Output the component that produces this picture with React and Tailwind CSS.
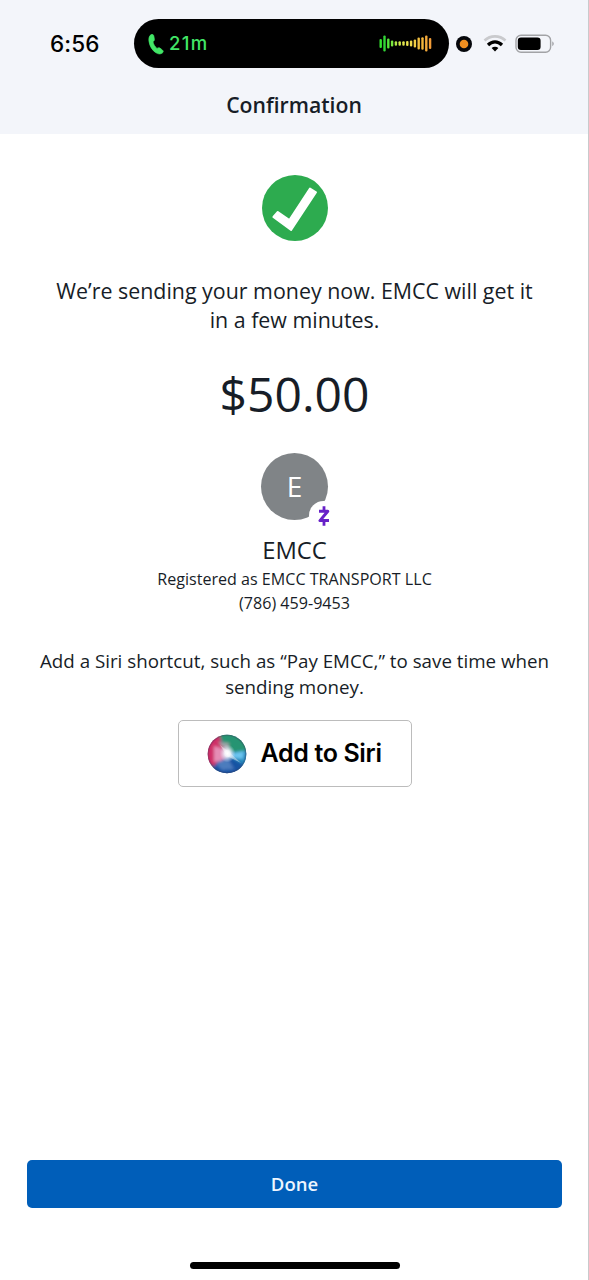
const BARS = [
  [0, 9, '#35e22f'], [3.8, 16, '#32d636'], [7.6, 10, '#55e63a'], [11.4, 6, '#7ae83f'],
  [15.2, 4.5, '#b0ea45'], [19, 4.5, '#d0ea4c'], [22.8, 4.5, '#e2e64e'], [26.6, 5, '#eae14c'],
  [30.4, 6, '#f0d94a'], [34.2, 8, '#f2ce45'], [38, 12, '#f2c040'], [41.8, 12.5, '#f4b63c'],
  [45.6, 16, '#f4aa3b'], [49.4, 11, '#f29c38'],
];

function StatusBar() {
  return (
    <div className="flex h-[87px] items-center font-['Inter','Liberation_Sans',sans-serif]">
      <span className="ml-[50px] mt-px w-[84px] whitespace-nowrap text-[22.5px] font-medium tracking-[0.1px] text-black">6:56</span>
      <div className="flex h-[49px] w-[315px] shrink-0 items-center rounded-full bg-black pl-[14px] pr-[16px]">
        <svg className="mt-px h-[21px] w-[16px]" viewBox="0 0 16 21" fill="#42e667" stroke="#42e667" strokeWidth="0.6">
          <path d="M3.2.6C4.6-.1 5.5.6 5.9 2.2L6.4 5.200C6.600 6.400 5.900 7 5 7.800C5.500 10.400 7 12.700 9 14.400C10 13.700 11 13.400 12 14.100L14.400 16C15.600 17 15.500 18.200 14.300 19C12.600 20.300 10.200 20.300 8 18.800C4.300 16.400 1.500 12.200.900 6.900C.600 4.100 1.200 1.600 3.200.600Z" />
        </svg>
        <span className="ml-[5px] text-[18.5px] font-medium tracking-[1.3px] text-[#42e667]">21m</span>
        <svg className="ml-auto h-[20px] w-[54px]" viewBox="0 0 54 20">
          {BARS.map(([x, h, c]) => (
            <rect key={x} x={x + 0.5} y={9.5 - h / 2} width="2.4" height={h} rx="1.1" fill={c} />
          ))}
        </svg>
      </div>
      <svg className="ml-[7px] h-[16px] w-[16px]" viewBox="0 0 16 16">
        <circle cx="8" cy="8" r="8" fill="#05070b" />
        <circle cx="8" cy="8" r="4.3" fill="#ef8e20" />
      </svg>
      <svg className="ml-[11px] h-[18px] w-[24px]" viewBox="0 0 24 18" fill="none" strokeWidth="3.2">
        <path d="M1.5 5.500C7.500 0 16.500 0 22.500 5.500" stroke="#c9cacd" strokeWidth="2.6" />
        <path d="M5 10C9.200 5.800 14.800 5.800 19 10" stroke="#000" />
        <path d="M8.600 13C10.500 11.300 13.500 11.300 15.400 13L12 16.600Z" fill="#000" stroke="none" />
      </svg>
      <svg className="ml-[8px] h-[20px] w-[40px]" viewBox="0 0 40 20">
        <rect x="1" y="1.2" width="34.6" height="17" rx="5" fill="none" stroke="#a2a3a6" strokeWidth="1.4" />
        <rect x="2.8" y="3.6" width="22.8" height="12.4" rx="3.2" fill="#000" />
        <path d="M37.400 7.300Q40 9.800 37.400 12.300Z" fill="#929397" />
      </svg>
    </div>
  );
}

function SiriOrb() {
  return (
    <svg className="h-[40px] w-[40px] shrink-0" viewBox="0 0 40 40">
      <defs>
        <clipPath id="orb"><circle cx="20" cy="20" r="19.3" /></clipPath>
        <filter id="soft" x="-50%" y="-50%" width="200%" height="200%"><feGaussianBlur stdDeviation="1.8" /></filter>
        <radialGradient id="glow">
          <stop offset="0" stopColor="#fff" />
          <stop offset=".35" stopColor="#fafbff" stopOpacity=".9" />
          <stop offset="1" stopColor="#d5dbf2" stopOpacity="0" />
        </radialGradient>
      </defs>
      <g clipPath="url(#orb)">
        <rect width="40" height="40" fill="#46688f" />
        <g filter="url(#soft)">
          <path d="M10-2H42V19L22 18Z" fill="#269472" />
          <path d="M20 19 43 16V34L30 38Z" fill="#2389bd" />
          <path d="M18 20 37 31 26 44H2L8 29Z" fill="#1752a3" />
          <path d="M-2 0H12L18 20 7 32-2 30Z" fill="#cf2f68" />
          <path d="M7 12 20 16 17 27 7 28Z" fill="#e58db5" />
          <path d="M22 20 37 17 36 25 27 24Z" fill="#6cc5f0" />
          <path d="M9 30 20 23 27 35 15 36Z" fill="#4b7bbd" />
          <path d="M11 8 22 9 21 19Z" fill="#a0a4a8" />
        </g>
        <ellipse cx="20.5" cy="19.5" rx="8" ry="9" fill="url(#glow)" />
        <path d="M13 11 21.500 17.500 34 29 20 22Z" fill="#fff" opacity=".4" />
        <circle cx="20" cy="20" r="18.7" fill="none" stroke="#463553" strokeOpacity=".3" strokeWidth="1.2" />
      </g>
    </svg>
  );
}

export default function App() {
  return (
    <div className="flex h-[1280px] w-[589px] flex-col overflow-hidden border-r border-[#c9cacc] bg-white font-['Open_Sans','Noto_Sans',sans-serif] text-[#171d27]">
      <header className="h-[134px] shrink-0 bg-[#f3f5fa]">
        <StatusBar />
        <h1 className="text-center text-[21.2px] font-semibold leading-[36px]">Confirmation</h1>
      </header>
      <main className="flex flex-col items-center whitespace-nowrap pl-px text-center">
        <svg className="mt-[41px] h-[66px] w-[66px]" viewBox="0 0 66 66">
          <circle cx="33" cy="33" r="33" fill="#2dab4f" />
          <path d="M48 13.600 54 17.300 29.100 55 11.400 42 15.800 37 27.400 45Z" fill="#fff" stroke="#fff" strokeWidth="2" strokeLinejoin="round" />
        </svg>
        <p className="mt-[35px] text-[21.4px] leading-[29px]">We’re sending your money now. EMCC will get it<br />in a few minutes.</p>
        <p className="mt-[30px] text-[48px] leading-[60px]">$50.00</p>
        <div className="relative mt-[29px] flex h-[67px] w-[67px] items-center justify-center rounded-full bg-[#808487] text-[28px] text-white">
          <span className="-mt-px">E</span>
          <span className="absolute left-[48px] top-[48px] flex h-[29px] w-[29px] items-center justify-center rounded-full bg-white">
            <svg className="h-[20px] w-[12px]" viewBox="0 0 12 20" fill="none" stroke="#6720c8">
              <path d="M1 5.200H9.800L2 14.600H11" strokeWidth="3" strokeLinejoin="round" />
              <path d="M6 .300V4M6 15V19.700" strokeWidth="2.8" />
            </svg>
          </span>
        </div>
        <h2 className="mt-[14px] text-[23.8px] leading-[32px]">EMCC</h2>
        <p className="mt-px text-[16.1px] leading-[24px]">Registered as EMCC TRANSPORT LLC<br />(786) 459-9453</p>
        <p className="mt-[33px] text-[18.75px] leading-[26px]">Add a Siri shortcut, such as “Pay EMCC,” to save time when<br />sending money.</p>
        <button className="mt-[20px] flex h-[67px] w-[234px] items-center rounded-[5px] border-[1.5px] border-[#bcbcbc] bg-white pl-[28px] font-['Inter','Liberation_Sans',sans-serif] text-[25px] font-semibold tracking-[-0.35px] text-black">
          <SiriOrb />
          <span className="ml-[14px] mt-px">Add to Siri</span>
        </button>
      </main>
      <footer className="mt-auto flex h-[120px] shrink-0 flex-col items-center pl-px">
        <button className="h-[48px] w-[535px] rounded-[5px] bg-[#005eb9] text-[18.5px] font-semibold text-[#edf5ff]">Done</button>
        <div className="mt-[54px] h-[7px] w-[210px] rounded-full bg-black" />
      </footer>
    </div>
  );
}
